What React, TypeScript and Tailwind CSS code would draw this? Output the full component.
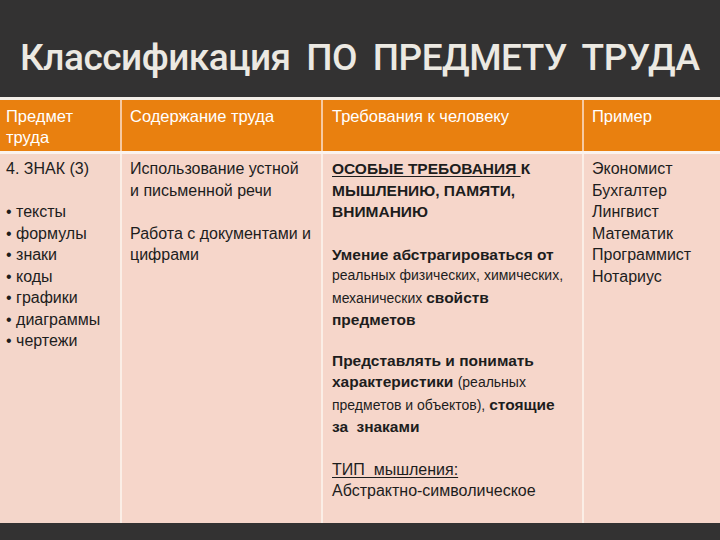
export default function App() {
  return (
    <div
      className="w-[720px] h-[540px] bg-[#333232] flex flex-col overflow-hidden"
      style={{ fontFamily: '"Liberation Sans", Arial, sans-serif' }}
    >
      {/* Title */}
      <div className="h-[97px] flex items-center pl-[20px] pt-[18px]">
        <h1
          className="text-[37px] leading-none text-[#ece9e2] font-medium tracking-[-0.5px] [word-spacing:7px] whitespace-nowrap"
          style={{ fontFamily: 'Roboto, "Liberation Sans", sans-serif' }}
        >
          Классификация ПО ПРЕДМЕТУ ТРУДА
        </h1>
      </div>

      {/* Table */}
      <div className="border-t-[3px] border-[#f4efe8] grid grid-cols-[122px_201px_261px_136px] text-[16px] leading-[21.5px] text-[#1d1d1d]">
        {/* Header */}
        <div className="bg-[#e9800f] h-[51px] pl-[6px] pt-[6px] text-white text-[16.5px] leading-[21px] border-r-2 border-[#f7c9a0]">
          Предмет
          <br />
          труда
        </div>
        <div className="bg-[#e9800f] h-[51px] pl-[8px] pt-[6px] text-white text-[16.5px] leading-[21px] border-r-2 border-[#f7c9a0]">
          Содержание труда
        </div>
        <div className="bg-[#e9800f] h-[51px] pl-[9px] pt-[6px] text-white text-[16.5px] leading-[21px] border-r-2 border-[#f7c9a0]">
          Требования к человеку
        </div>
        <div className="bg-[#e9800f] h-[51px] pl-[8px] pt-[6px] text-white text-[16.5px] leading-[21px]">
          Пример
        </div>

        {/* Body */}
        <div className="col-span-4 h-[3px] bg-[#fbf3ee]" />

        <div className="bg-[#f4d6ca] h-[369px] pl-[6px] pt-[4px] border-r-2 border-[#fbeee6]">
          <div>4. ЗНАК (3)</div>
          <div className="h-[21.5px]" />
          <div>• тексты</div>
          <div>• формулы</div>
          <div>• знаки</div>
          <div>• коды</div>
          <div>• графики</div>
          <div>• диаграммы</div>
          <div>• чертежи</div>
        </div>

        <div className="bg-[#f6d6ca] pl-[8px] pt-[4px] border-r-2 border-[#fbeee6]">
          <div>Использование устной</div>
          <div>и письменной речи</div>
          <div className="h-[21.5px]" />
          <div>Работа с документами и</div>
          <div>цифрами</div>
        </div>

        <div className="bg-[#f6d6ca] pl-[9px] pt-[4px] border-r-2 border-[#fbeee6] text-[15.5px]">
          <div className="font-bold">
            <span className="underline underline-offset-2">ОСОБЫЕ ТРЕБОВАНИЯ </span>К
          </div>
          <div className="font-bold">МЫШЛЕНИЮ, ПАМЯТИ,</div>
          <div className="font-bold">ВНИМАНИЮ</div>
          <div className="h-[21px]" />
          <div className="font-bold">Умение абстрагироваться от</div>
          <div className="text-[14px]">реальных физических, химических,</div>
          <div>
            <span className="text-[14px]">механических </span>
            <span className="font-bold">свойств</span>
          </div>
          <div className="font-bold">предметов</div>
          <div className="h-[19px]" />
          <div className="font-bold">Представлять и понимать</div>
          <div>
            <span className="font-bold">характеристики </span>
            <span className="text-[14px]">(реальных</span>
          </div>
          <div>
            <span className="text-[14px]">предметов и объектов), </span>
            <span className="font-bold">стоящие</span>
          </div>
          <div className="font-bold [word-spacing:4px]">за знаками</div>
          <div className="h-[21px]" />
          <div className="text-[16px]">
            <span className="underline underline-offset-2">ТИП&nbsp; мышления:</span>
          </div>
          <div className="text-[16px]">Абстрактно-символическое</div>
        </div>

        <div className="bg-[#f6d6ca] pl-[8px] pt-[4px]">
          <div>Экономист</div>
          <div>Бухгалтер</div>
          <div>Лингвист</div>
          <div>Математик</div>
          <div>Программист</div>
          <div>Нотариус</div>
        </div>
      </div>
    </div>
  );
}
